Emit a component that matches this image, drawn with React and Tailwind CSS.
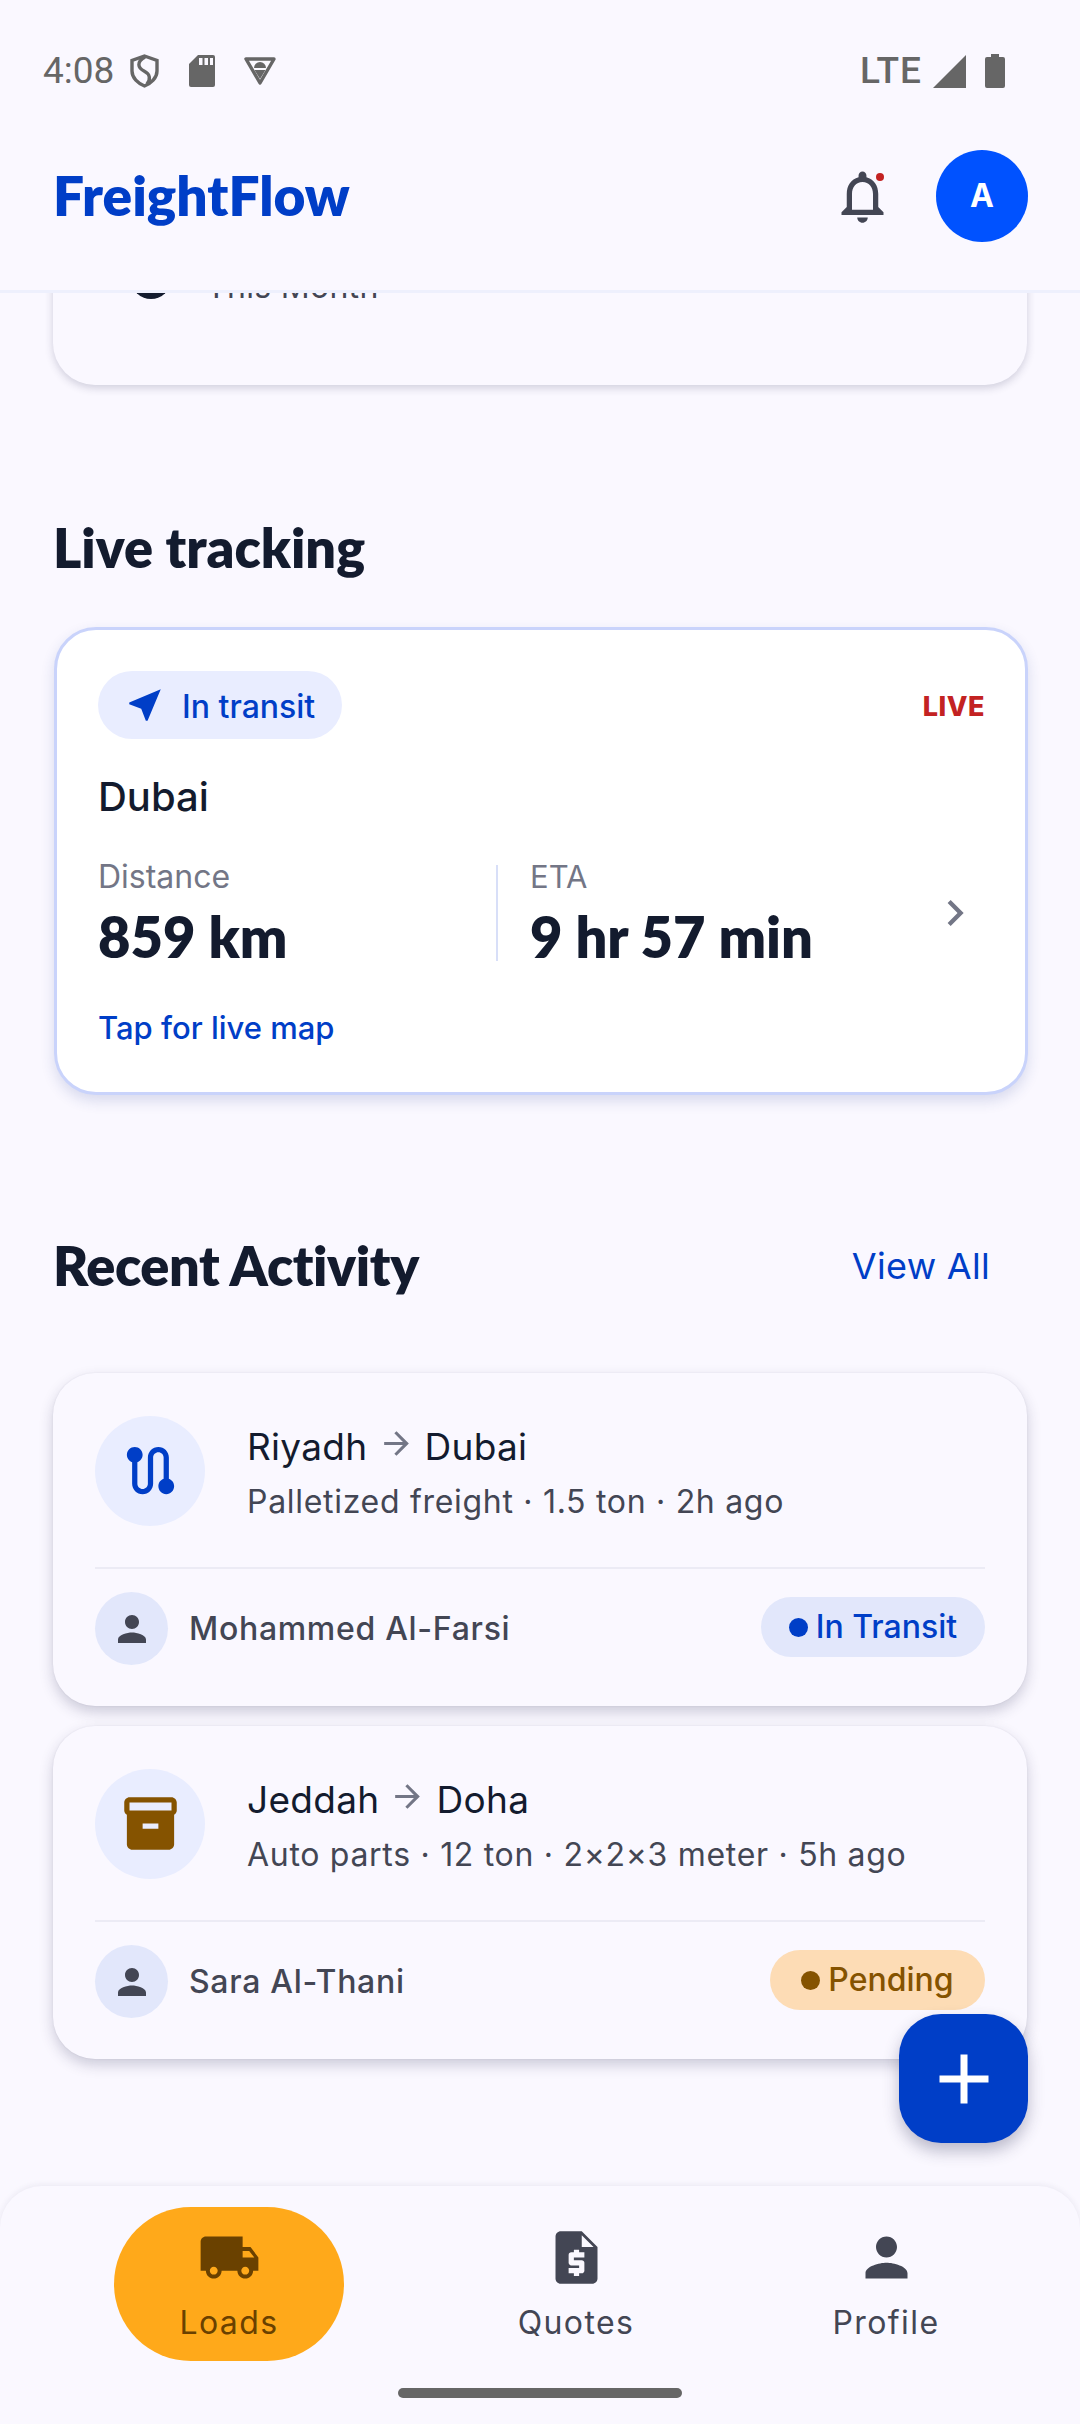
import React from 'react';

const ICONS = {
  nearMe: 'M21 3L3 10.53v.98l6.84 2.65L12.48 21h.98L21 3z',
  person: 'M12 12c2.21 0 4-1.79 4-4s-1.79-4-4-4-4 1.79-4 4 1.79 4 4 4zm0 2c-2.67 0-8 1.34-8 4v2h16v-2c0-2.66-5.33-4-8-4z',
  truck: 'M20 8h-3V4H3c-1.1 0-2 .9-2 2v11h2c0 1.66 1.34 3 3 3s3-1.34 3-3h6c0 1.66 1.34 3 3 3s3-1.34 3-3h2v-5l-3-4zM6 18.5c-.83 0-1.5-.67-1.5-1.5s.67-1.5 1.5-1.5 1.5.67 1.5 1.5-.67 1.5-1.5 1.5zm13.5-9l1.96 2.5H17V9.5h2.5zm-1.5 9c-.83 0-1.5-.67-1.5-1.5s.67-1.5 1.5-1.5 1.5.67 1.5 1.5-.67 1.5-1.5 1.5z',
  quote: 'M14 2H6C4.9 2 4.01 2.9 4.01 4L4 20c0 1.1.89 2 1.99 2H18c1.1 0 2-.9 2-2V8l-6-6zm1 10h-4v1h3c.55 0 1 .45 1 1v3c0 .55-.45 1-1 1h-1v1h-2v-1H9v-2h4v-1h-3c-.55 0-1-.45-1-1v-3c0-.55.45-1 1-1h1V9h2v1h2v2zm-1-4V3.5L18.5 8H14z',
  bell: 'M12 22c1.1 0 2-.9 2-2h-4c0 1.1.9 2 2 2zm6-6v-5c0-3.07-1.63-5.64-4.5-6.32V4c0-.83-.67-1.5-1.5-1.5s-1.5.67-1.5 1.5v.68C7.64 5.36 6 7.92 6 11v5l-2 2v1h16v-1l-2-2zm-2 1H8v-6c0-2.48 1.51-4.5 4-4.5s4 2.02 4 4.5v6z',
  box: 'M20 2H4c-1 0-2 .9-2 2v3.01c0 .72.43 1.34 1 1.69V20c0 1.1 1.1 2 2 2h14c.9 0 2-.9 2-2V8.7c.57-.35 1-.97 1-1.69V4c0-1.1-1-2-2-2zm-5 12H9v-2h6v2zm5-7H4V4l16-.02V7z',
  route: 'M19 15.18V7c0-2.21-1.79-4-4-4s-4 1.79-4 4v10c0 1.1-.9 2-2 2s-2-.9-2-2V8.82C8.16 8.4 9 7.3 9 6c0-1.66-1.34-3-3-3S3 4.34 3 6c0 1.3.84 2.4 2 2.82V17c0 2.21 1.79 4 4 4s4-1.79 4-4V7c0-1.1.9-2 2-2s2 .9 2 2v8.18c-1.16.41-2 1.51-2 2.82 0 1.66 1.34 3 3 3s3-1.34 3-3c0-1.3-.84-2.4-2-2.82z',
  chevron: 'M10 6L8.59 7.41 13.17 12l-4.58 4.59L10 18l6-6z',
  arrow: 'M12 4l-1.41 1.41L16.17 11H4v2h12.17l-5.58 5.59L12 20l8-8z',
  add: 'M19 13h-6v6h-2v-6H5v-2h6V5h2v6h6v2z',
};

const Icon = ({ name, className }) => (
  <svg viewBox="0 0 24 24" fill="currentColor" className={className}>
    <path d={ICONS[name]} />
  </svg>
);

const ACTIVITY = [
  {
    from: 'Riyadh',
    to: 'Dubai',
    detail: 'Palletized freight · 1.5 ton · 2h ago',
    person: 'Mohammed Al-Farsi',
    status: 'In Transit',
    icon: 'route',
    iconColor: 'text-[#003ec7]',
    badge: 'bg-[#e2e7fb] text-[#003ec7] w-[224px]',
    dot: 'bg-[#003ec7]',
  },
  {
    from: 'Jeddah',
    to: 'Doha',
    detail: 'Auto parts · 12 ton · 2×2×3 meter · 5h ago',
    person: 'Sara Al-Thani',
    status: 'Pending',
    icon: 'box',
    iconColor: 'text-[#855300]',
    badge: 'bg-[#fddcb5] text-[#855300] w-[215px]',
    dot: 'bg-[#855300]',
  },
];

const TABS = [
  { label: 'Loads', icon: 'truck', active: true, offset: '' },
  { label: 'Quotes', icon: 'quote', offset: 'ml-[117px]' },
  { label: 'Profile', icon: 'person', offset: 'ml-[80px]' },
];

function StatusBar() {
  return (
    <div className="h-[142px] flex items-center justify-between pl-[43px] pr-[75px] text-[#666666] font-['Roboto',sans-serif] text-[37px]">
      <div className="flex items-center">
        <span className="w-[87px]">4:08</span>
        <svg viewBox="0 0 29 34" className="w-[29px] h-[34px]" fill="none" stroke="currentColor" strokeWidth="3.4">
          <path d="M14.5 2 L27 6.5 V17 C27 24 21 29.5 14.5 32 C8 29.5 2 24 2 17 V6.5 Z" />
          <path d="M15 3 C6 8 8 14 14 17 C20 20 21 25 17 30" />
        </svg>
        <svg viewBox="0 0 26 32" className="w-[26px] h-[32px] ml-[30px]">
          <path fill="currentColor" d="M9 0H24a2 2 0 0 1 2 2V30a2 2 0 0 1-2 2H2a2 2 0 0 1-2-2V9z" />
          <path fill="#faf8ff" d="M10 3h3.5v7H10zM15.5 3H19v7h-3.5zM21 3h3v7h-3z" />
        </svg>
        <svg viewBox="0 0 34 30" className="w-[34px] h-[30px] ml-[28px]">
          <path fill="none" stroke="currentColor" strokeWidth="3.4" strokeLinejoin="round" d="M3 3H31L17 27Z" />
          <path fill="currentColor" d="M11 12a6 6 0 0 1 12 0zM11.5 14h11L17 23z" />
        </svg>
      </div>
      <div className="flex items-center">
        <span className="font-medium tracking-[1px] mr-[11px]">LTE</span>
        <svg viewBox="0 0 33 33" className="w-[33px] h-[33px]">
          <path fill="currentColor" d="M33 0V33H0z" />
        </svg>
        <svg viewBox="0 0 20 34" className="w-[20px] h-[34px] ml-[19px]">
          <path fill="currentColor" d="M6 0h8v3h4a2 2 0 0 1 2 2v27a2 2 0 0 1-2 2H2a2 2 0 0 1-2-2V5a2 2 0 0 1 2-2h4z" />
        </svg>
      </div>
    </div>
  );
}

function ActivityCard({ item }) {
  return (
    <div className="h-[333px] rounded-[42px] bg-[#faf8ff] px-[42px] pt-[42px] shadow-[0_6px_14px_rgba(40,40,80,0.22),0_0_2px_rgba(40,40,80,0.08)]">
      <div className="flex items-center h-[111px]">
        <div className="w-[110px] h-[110px] rounded-full bg-[#e9edff] flex items-center justify-center shrink-0">
          <Icon name={item.icon} className={`w-[63px] h-[63px] ${item.iconColor}`} />
        </div>
        <div className="ml-[42px] pt-[5px] flex flex-col">
          <div className="flex items-center text-[#131b2e] text-[37px] leading-[50px] tracking-[0.3px] font-['Inter',sans-serif]">
            <span>{item.from}</span>
            <Icon name="arrow" className="w-[37px] h-[37px] mx-[10px] -mt-[8px] text-[#737686]" />
            <span>{item.to}</span>
          </div>
          <div className="text-[#434654] text-[32px] leading-[44px] tracking-[0.7px] mt-[8px] font-['Inter',sans-serif]">{item.detail}</div>
        </div>
      </div>
      <div className="h-[2px] bg-[#ecebf5] mt-[41px]" />
      <div className="flex items-center justify-between mt-[23px]">
        <div className="flex items-center">
          <div className="w-[73px] h-[73px] rounded-full bg-[#e2e7fb] flex items-center justify-center">
            <Icon name="person" className="w-[42px] h-[42px] text-[#434654]" />
          </div>
          <span className="ml-[21px] text-[#434654] text-[32px] tracking-[0.7px] font-medium font-['Inter',sans-serif]">{item.person}</span>
        </div>
        <div className={`h-[60px] -mt-[3px] rounded-full flex items-center justify-center gap-[8px] ${item.badge}`}>
          <span className={`w-[19px] h-[19px] rounded-full ${item.dot}`} />
          <span className="text-[32px] font-medium font-['Inter',sans-serif]">{item.status}</span>
        </div>
      </div>
    </div>
  );
}

function TrackingCard() {
  return (
    <div className="ml-[54px] w-[974px] h-[468px] rounded-[42px] bg-white border-[3px] border-[#c9d3fb] px-[41px] pt-[41px] shadow-[0_6px_14px_rgba(40,60,140,0.16)]">
      <div className="flex items-start justify-between">
        <div className="w-[244px] h-[68px] rounded-full bg-[#e9edff] flex items-center pl-[26px] text-[#003ec7]">
          <Icon name="nearMe" className="w-[42px] h-[42px]" />
          <span className="ml-[16px] mt-[4px] text-[32px] font-medium font-['Inter',sans-serif]">In transit</span>
        </div>
        <span className="mt-[16px] -mr-[1px] text-[#c32222] text-[27px] font-extrabold tracking-[0.5px] font-['Inter',sans-serif]">LIVE</span>
      </div>
      <div className="mt-[32px] text-[#131b2e] text-[40px] leading-[52px] font-medium font-['Inter',sans-serif]">Dubai</div>
      <div className="flex items-center mt-[30px]">
        <div className="w-[398px]">
          <div className="text-[#737686] text-[32px] leading-[40px] mt-[4px] font-['Inter',sans-serif]">Distance</div>
          <div className="text-[#131b2e] text-[56px] leading-[70px] mt-[5px] font-extrabold font-['Lato',sans-serif]">859 km</div>
        </div>
        <div className="w-[2px] h-[96px] bg-[#d8dff8]" />
        <div className="flex-1 pl-[32px]">
          <div className="text-[#737686] text-[31px] leading-[40px] mt-[4px] font-['Inter',sans-serif]">ETA</div>
          <div className="text-[#131b2e] text-[56px] leading-[70px] mt-[5px] font-extrabold font-['Lato',sans-serif]">9 hr 57 min</div>
        </div>
        <Icon name="chevron" className="w-[52px] h-[52px] mr-[3px] text-[#737686]" />
      </div>
      <div className="mt-[34px] text-[#003ec7] text-[31px] leading-[44px] font-medium font-['Inter',sans-serif]">Tap for live map</div>
    </div>
  );
}

export default function App() {
  return (
    <div className="relative w-[1080px] h-[2424px] overflow-hidden bg-[#faf8ff] flex flex-col">
      <header className="h-[293px] shrink-0 border-b-[3px] border-[#eef0fd]">
        <StatusBar />
        <div className="flex items-start justify-between pl-[53px] pr-[52px] pt-[8px]">
          <div className="text-[#003ec7] text-[55px] leading-[90px] font-extrabold font-['Lato',sans-serif]">FreightFlow</div>
          <div className="flex items-center">
            <div className="relative">
              <Icon name="bell" className="w-[63px] h-[63px] text-[#434654]" />
              <span className="absolute top-[8px] right-[10px] w-[8px] h-[8px] rounded-full bg-[#c32222]" />
            </div>
            <div className="ml-[42px] w-[92px] h-[92px] rounded-full bg-[#0052ff] flex items-center justify-center text-white text-[32px] font-bold font-['Inter',sans-serif]">A</div>
          </div>
        </div>
      </header>

      <main className="flex-1 overflow-hidden">
        <div className="mx-[53px] -mt-[208px] h-[300px] rounded-[42px] shadow-[0_3px_8px_rgba(40,40,80,0.2)] pl-[78px] pt-[174px] flex items-start gap-[35px]">
          <div className="w-[40px] h-[40px] rounded-full bg-[#131b2e]" />
          <div className="mt-[8px] text-[#434654] text-[32px] leading-[40px] tracking-[0.3px] font-['Inter',sans-serif]">This Month</div>
        </div>
        <h2 className="mx-[53px] mt-[131px] text-[#131b2e] text-[54px] leading-[64px] font-extrabold font-['Lato',sans-serif]">Live tracking</h2>
        <div className="mt-[47px]">
          <TrackingCard />
        </div>
        <div className="mx-[53px] mt-[139px] flex items-center justify-between">
          <h2 className="text-[#131b2e] text-[54px] leading-[64px] tracking-[-0.4px] font-extrabold font-['Lato',sans-serif]">Recent Activity</h2>
          <span className="mr-[37px] text-[#003ec7] text-[36px] tracking-[0.3px] font-['Inter',sans-serif]">View All</span>
        </div>
        <div className="mx-[53px] mt-[75px] flex flex-col gap-[20px]">
          {ACTIVITY.map(item => (
            <ActivityCard key={item.from} item={item} />
          ))}
        </div>
      </main>

      {/* FAB sits over the last card */}
      <button className="absolute left-[899px] top-[2014px] w-[129px] h-[129px] rounded-[42px] bg-[#003ec7] flex items-center justify-center text-white shadow-[0_8px_16px_rgba(40,40,80,0.3)]">
        <Icon name="add" className="w-[84px] h-[84px]" />
      </button>

      <nav className="h-[238px] shrink-0 rounded-t-[42px] bg-[#faf8ff] shadow-[0_-1px_6px_rgba(40,40,80,0.08)] relative">
        <div className="flex pl-[114px] pt-[21px]">
          {TABS.map(tab => (
            <div
              key={tab.label}
              className={`w-[230px] h-[154px] flex flex-col items-center pt-[19px] rounded-[77px] ${tab.offset} ${tab.active ? 'bg-[#ffa91a] text-[#6a4100]' : 'text-[#434654]'}`}
            >
              <Icon name={tab.icon} className="w-[63px] h-[63px]" />
              <span className="mt-[12px] text-[32px] leading-[44px] tracking-[1.4px] font-['Inter',sans-serif]">{tab.label}</span>
            </div>
          ))}
        </div>
        <div className="mx-auto mt-[27px] w-[284px] h-[10px] rounded-full bg-[#666666]" />
      </nav>
    </div>
  );
}
